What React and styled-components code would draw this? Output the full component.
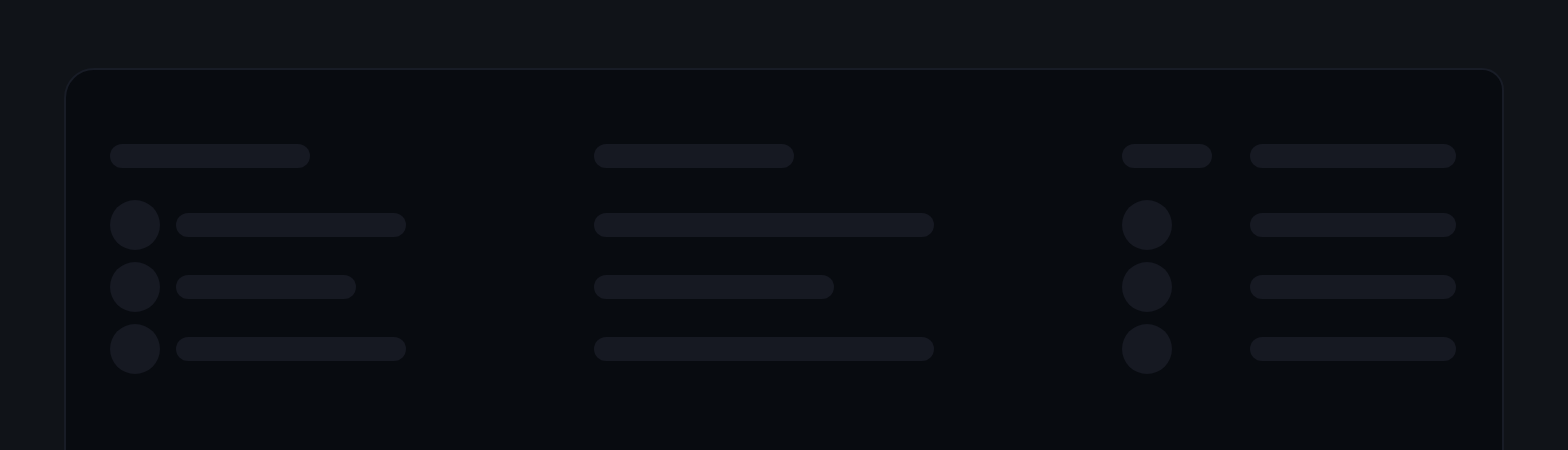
import React from "react";
import styled, { createGlobalStyle } from "styled-components";

const GlobalStyle = createGlobalStyle`
  html, body {
    margin: 0;
    padding: 0;
    background: #101318;
    font-family: "Inter", "Liberation Sans", sans-serif;
    overflow: hidden;
  }
`;

const Page = styled.div`
  padding: 68px 64px 0;
  min-height: 450px;
  box-sizing: border-box;
`;

const Card = styled.section`
  box-sizing: border-box;
  height: 420px;
  background: #080b10;
  border: 2px solid #181c26;
  border-radius: 30px 22px 0 0;
  padding: 74px 44px 0;
`;

const Row = styled.div`
  display: grid;
  grid-template-columns: 484px 528px 128px 206px;
  align-items: center;
  height: ${(p) => p.$h}px;
  margin-bottom: ${(p) => p.$mb}px;
`;

const Cell = styled.div`
  display: flex;
  align-items: center;
  gap: 16px;
`;

const Bar = styled.div`
  width: ${(p) => p.$w}px;
  height: 24px;
  border-radius: 12px;
  background: #161922;
`;

const Circle = styled.div`
  width: 50px;
  height: 50px;
  border-radius: 50%;
  background: #161922;
  flex-shrink: 0;
`;

const rows = [
  { a: 230, b: 340 },
  { a: 180, b: 240 },
  { a: 230, b: 340 },
];

export default function App() {
  return (
    <>
      <GlobalStyle />
      <Page>
        <Card>
          <Row $h={24} $mb={32}>
            <Cell><Bar $w={200} /></Cell>
            <Cell><Bar $w={200} /></Cell>
            <Cell><Bar $w={90} /></Cell>
            <Cell><Bar $w={206} /></Cell>
          </Row>
          {rows.map((r, i) => (
            <Row key={i} $h={50} $mb={12}>
              <Cell>
                <Circle />
                <Bar $w={r.a} />
              </Cell>
              <Cell><Bar $w={r.b} /></Cell>
              <Cell><Circle /></Cell>
              <Cell><Bar $w={206} /></Cell>
            </Row>
          ))}
        </Card>
      </Page>
    </>
  );
}
